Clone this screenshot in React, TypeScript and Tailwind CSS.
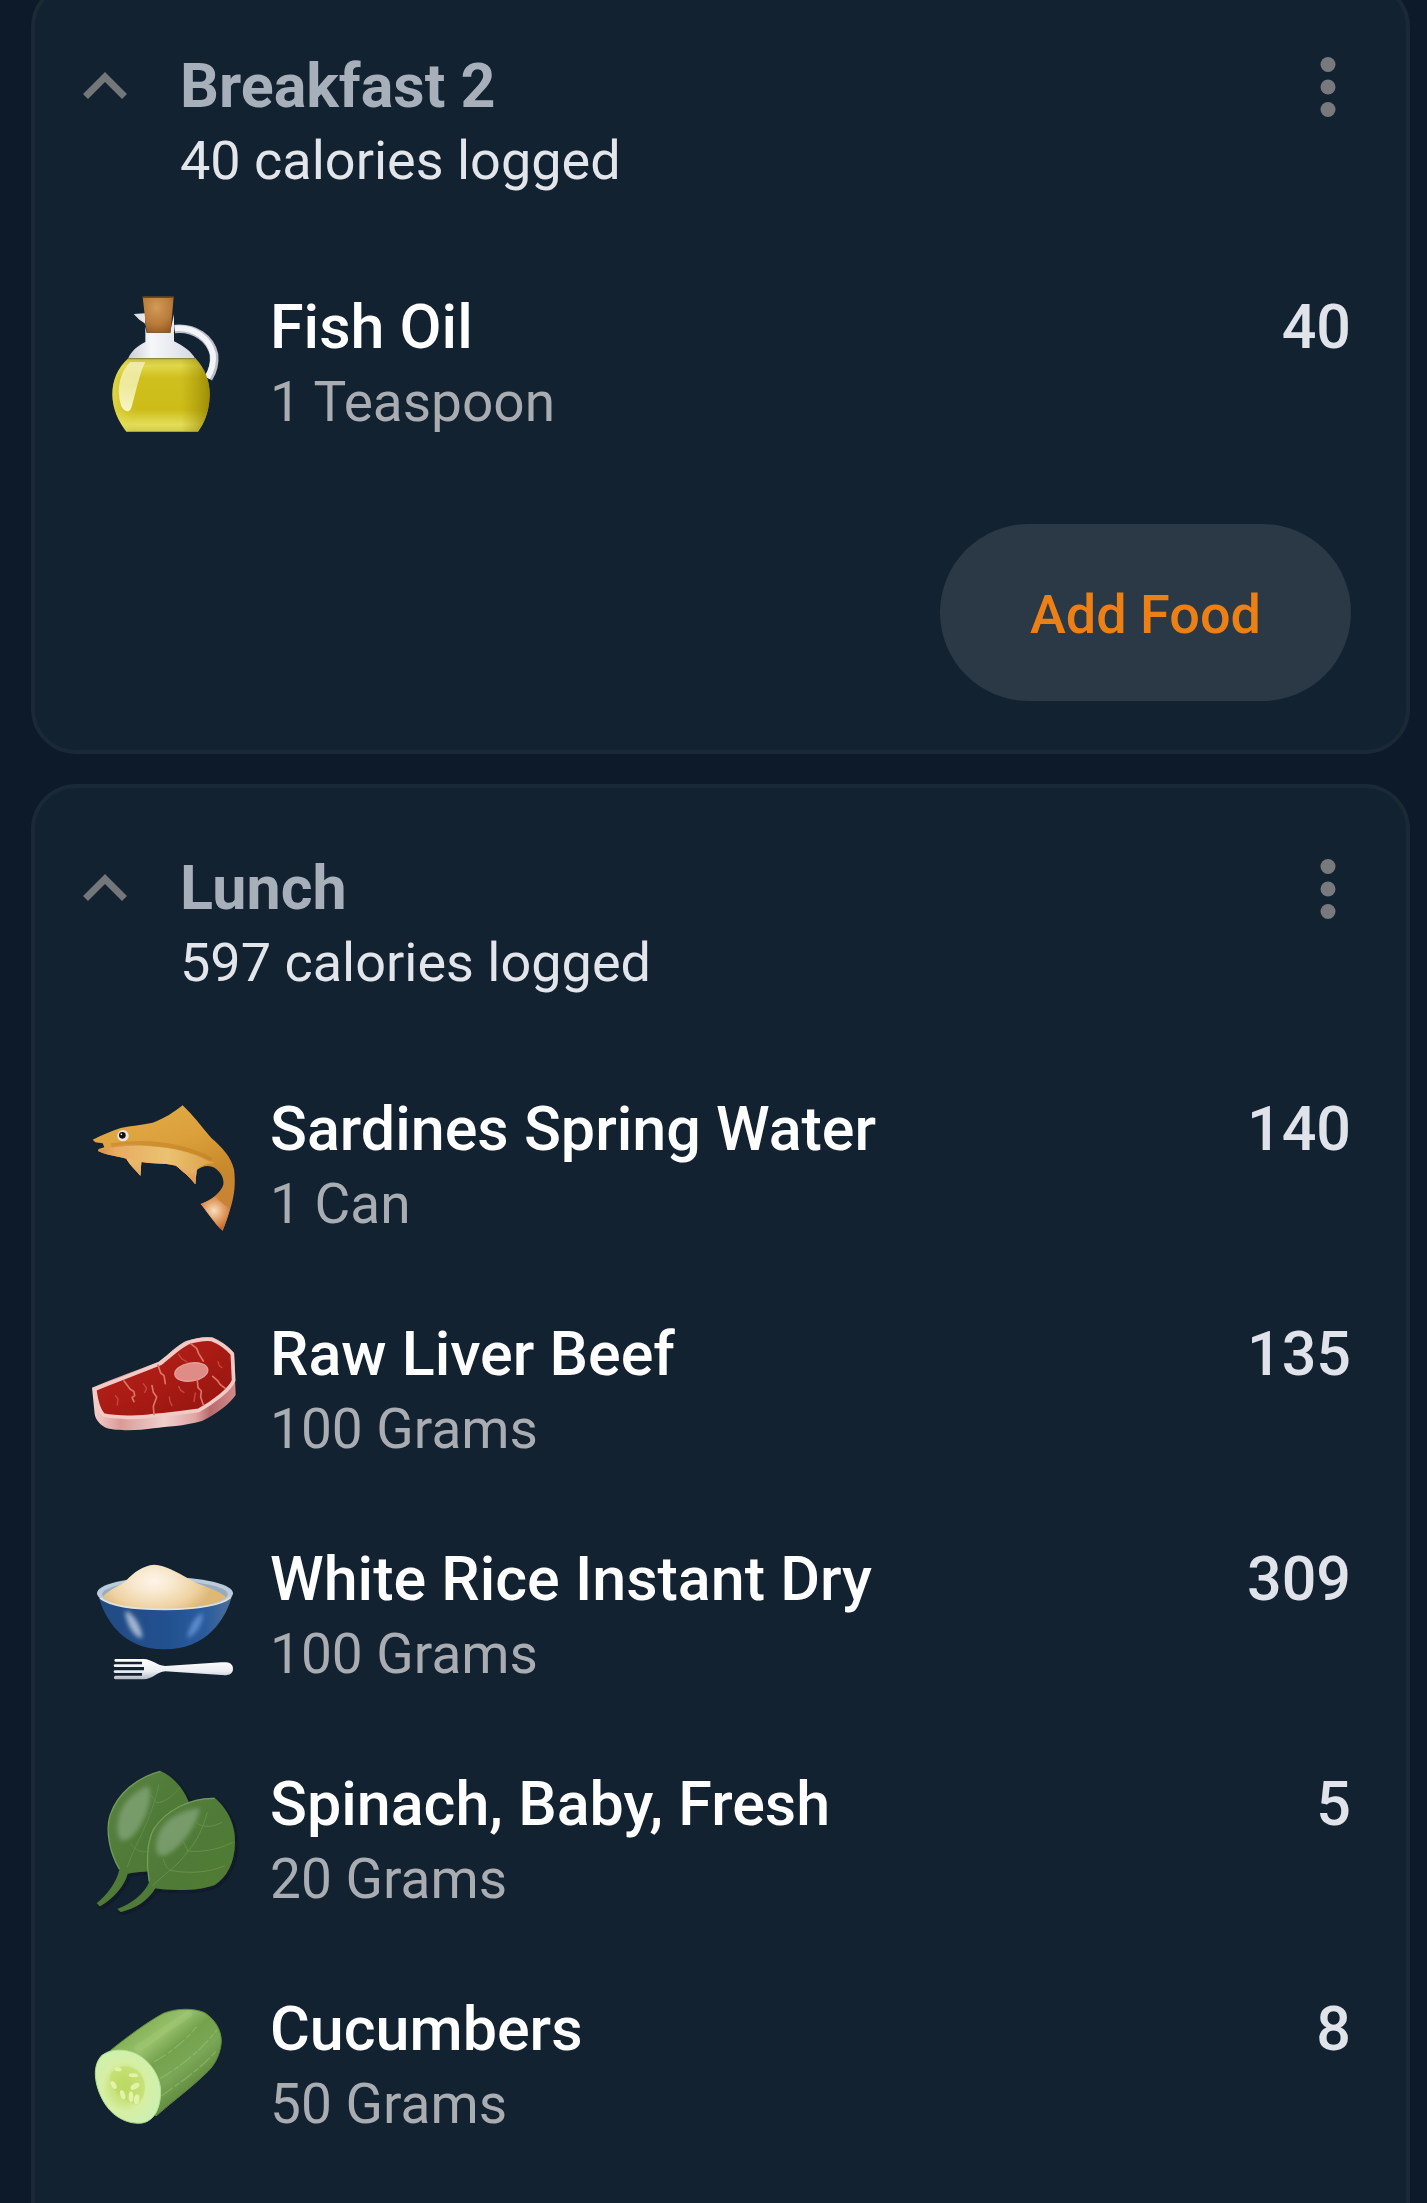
import type { ReactNode } from 'react';

function OilIcon() {
  return (
    <svg viewBox="30 32 450 450" className="size-[150px] shrink-0" aria-hidden="true">
      <defs>
        <linearGradient id="oil" x1="0" y1="0" x2="0" y2="1">
          <stop offset="0" stopColor="#c9be3c" />
          <stop offset="0.1" stopColor="#e0d84a" />
          <stop offset="0.26" stopColor="#cfc01f" />
          <stop offset="0.7" stopColor="#cdbc18" />
          <stop offset="0.9" stopColor="#e3de58" />
          <stop offset="1" stopColor="#d2cb4a" />
        </linearGradient>
        <linearGradient id="oilShade" x1="0" y1="0" x2="1" y2="0">
          <stop offset="0" stopColor="#f0ec7a" stopOpacity="0.5" />
          <stop offset="0.25" stopColor="#d8cc30" stopOpacity="0" />
          <stop offset="0.7" stopColor="#a59200" stopOpacity="0" />
          <stop offset="1" stopColor="#8d7d00" stopOpacity="0.75" />
        </linearGradient>
        <linearGradient id="glass" x1="0" y1="0" x2="1" y2="0">
          <stop offset="0" stopColor="#c9cdd6" />
          <stop offset="0.35" stopColor="#f6f7fa" />
          <stop offset="0.7" stopColor="#e6e8ee" />
          <stop offset="1" stopColor="#d5d8e0" />
        </linearGradient>
        <radialGradient id="cork" cx="0.45" cy="0.3" r="0.8">
          <stop offset="0" stopColor="#d39a58" />
          <stop offset="0.6" stopColor="#b87a38" />
          <stop offset="1" stopColor="#935518" />
        </radialGradient>
        <linearGradient id="oilGlow" x1="0" y1="0" x2="0" y2="1">
          <stop offset="0" stopColor="#f7f5cf" stopOpacity="0.7" />
          <stop offset="0.5" stopColor="#f4f1b0" stopOpacity="0.85" />
          <stop offset="1" stopColor="#f7f4c8" />
        </linearGradient>
      </defs>
      <path d="M284 149C345 143 392 178 402 226C405 254 398 276 385 297" fill="none" stroke="#b9bfca" strokeWidth="26" />
      <path d="M284 147C344 142 388 178 399 224C402 252 395 274 382 295" fill="none" stroke="#f3f4f7" strokeWidth="17" />
      <path d="M161 104L196 102V188C172 200 155 214 144 238H346C332 214 310 200 282 186V104L270 160H200L194 132L178 121Z" fill="url(#glass)" />
      <path d="M145 237H346C374 266 390 306 389 348C388 388 378 424 354 457H139C114 424 98 388 97 346C97 302 113 266 145 237Z" fill="url(#oil)" />
      <path d="M145 237H346C374 266 390 306 389 348C388 388 378 424 354 457H139C114 424 98 388 97 346C97 302 113 266 145 237Z" fill="url(#oilShade)" />
      <path d="M144 238H347" stroke="#8f8a3e" strokeWidth="4" />
      <path d="M150 248H196C178 284 170 330 154 385C146 404 130 396 123 378C108 326 120 280 150 248Z" fill="url(#oilGlow)" />
      <path d="M188 52H281L272 160H200Z" fill="url(#cork)" />
      <path d="M188 54H281" stroke="#794411" strokeWidth="4" />
    </svg>
  );
}

function FishIcon() {
  return (
    <svg viewBox="30 22 450 450" className="size-[150px] shrink-0" aria-hidden="true">
      <defs>
        <linearGradient id="fishBack" x1="0" y1="0" x2="0.4" y2="1">
          <stop offset="0" stopColor="#e3ad4c" />
          <stop offset="0.45" stopColor="#dba03a" />
          <stop offset="0.75" stopColor="#c8892c" />
          <stop offset="1" stopColor="#c98234" />
        </linearGradient>
        <linearGradient id="fishBelly" x1="0" y1="0" x2="1" y2="0">
          <stop offset="0" stopColor="#e08a4c" />
          <stop offset="0.15" stopColor="#e9ac62" />
          <stop offset="0.6" stopColor="#eac272" />
          <stop offset="1" stopColor="#dba247" />
        </linearGradient>
        <radialGradient id="fishTail" gradientUnits="userSpaceOnUse" cx="402" cy="378" r="58">
          <stop offset="0" stopColor="#f8dfc2" />
          <stop offset="0.45" stopColor="#e6a66e" />
          <stop offset="1" stopColor="#c26b30" />
        </radialGradient>
        <linearGradient id="fishFin" gradientUnits="userSpaceOnUse" x1="0" y1="222" x2="0" y2="299">
          <stop offset="0" stopColor="#e9bd6e" />
          <stop offset="0.5" stopColor="#e6ae62" />
          <stop offset="1" stopColor="#dd9252" />
        </linearGradient>
      </defs>
      <path d="M38 165C70 150 96 138 122 130C154 122 184 122 218 114C254 102 282 82 308 62C340 92 364 126 394 160C424 186 452 214 462 254C468 300 462 334 454 362C444 392 436 418 428 438C404 418 384 384 362 358C394 346 424 322 430 300C434 278 416 252 396 246C378 240 362 248 350 256L346 299C330 276 308 260 288 243C250 234 214 238 184 232L181 273C168 256 150 242 139 222C112 214 82 212 54 199L56 193L73 188L68 176L46 173Z" fill="url(#fishBack)" />
      <path d="M80 192C110 176 150 178 196 183C266 190 340 196 404 236C380 234 362 244 350 256L346 299C330 276 308 260 288 243C250 234 214 238 184 232L181 273C168 256 150 242 139 222C112 214 82 212 54 199Z" fill="url(#fishBelly)" />
      <path d="M94 182C180 170 292 172 394 226" fill="none" stroke="#bd761f" strokeOpacity="0.4" strokeWidth="13" />
      <path d="M139 222L184 232L181 273C168 256 150 242 139 222ZM288 243L350 254L346 299C330 276 308 260 288 243Z" fill="url(#fishFin)" />
      <path d="M362 358C378 352 394 344 406 335C420 352 436 364 451 371C444 396 436 420 428 438C404 418 384 384 362 358Z" fill="url(#fishTail)" />
      <circle cx="129" cy="153" r="17" fill="#e9e6df" />
      <circle cx="127" cy="152" r="10" fill="#141210" />
      <circle cx="124" cy="149" r="2.5" fill="#ffffff" />
    </svg>
  );
}

function SteakIcon() {
  return (
    <svg viewBox="30 22 450 450" className="size-[150px] shrink-0" aria-hidden="true">
      <defs>
        <linearGradient id="fat" x1="0" y1="0" x2="1" y2="0">
          <stop offset="0" stopColor="#f4d3d0" />
          <stop offset="0.2" stopColor="#d99b98" />
          <stop offset="0.5" stopColor="#f0cfcd" />
          <stop offset="0.72" stopColor="#e0a5a3" />
          <stop offset="0.82" stopColor="#b96a6c" />
          <stop offset="1" stopColor="#d28a8b" />
        </linearGradient>
        <linearGradient id="meat" x1="0" y1="0" x2="1" y2="1">
          <stop offset="0" stopColor="#b8251b" />
          <stop offset="0.5" stopColor="#a91b14" />
          <stop offset="1" stopColor="#93140f" />
        </linearGradient>
      </defs>
      <path d="M36 234C100 206 170 182 236 156C264 136 292 106 318 94C344 86 372 80 398 83C424 94 446 112 462 129L467 256C448 284 410 312 366 334C310 350 262 350 220 356C176 364 110 364 82 356C62 348 46 330 44 312Z" fill="url(#fat)" />
      <path d="M44 239C104 214 176 188 240 162C268 142 296 112 322 100C348 91 372 87 394 89C420 99 442 116 457 133L461 212C450 240 402 276 356 302C300 310 270 314 220 318C176 326 110 324 70 316C56 302 48 270 44 239Z" fill="url(#meat)" stroke="#f2cbc7" strokeWidth="11" strokeLinejoin="round" />
      <ellipse cx="334" cy="187" rx="50" ry="27" transform="rotate(-9 334 187)" fill="#df8c86" stroke="#e69f98" strokeWidth="4" />
      <g fill="none" stroke="#dc7468" strokeWidth="5" strokeLinecap="round" strokeLinejoin="round">
        <path d="M132 214L150 238L162 246L164 258L156 264L162 276" />
        <path d="M234 166L242 190L252 198L256 222" />
        <path d="M332 102L350 116L356 132L370 154" />
        <path d="M216 228L220 248L230 262L220 290L222 314" />
        <path d="M352 212L354 234L364 244L362 262L370 286" />
        <path d="M398 200L412 212L420 224L436 236" />
      </g>
      <g fill="none" stroke="#c9483e" strokeWidth="4" strokeLinecap="round">
        <path d="M106 258L114 268L112 286M190 222L200 236L194 248M268 262L270 276L276 288M296 230L302 242L312 248M296 134L306 148L322 157M346 250L342 276M414 156L418 168L426 174" />
      </g>
    </svg>
  );
}

function RiceIcon() {
  return (
    <svg viewBox="30 -8 450 450" className="size-[150px] shrink-0" aria-hidden="true">
      <defs>
        <linearGradient id="bowl" x1="0" y1="0" x2="1" y2="0">
          <stop offset="0" stopColor="#214b83" />
          <stop offset="0.5" stopColor="#22508f" />
          <stop offset="0.8" stopColor="#2a5c9d" />
          <stop offset="1" stopColor="#4d6f99" />
        </linearGradient>
        <radialGradient id="rice" gradientUnits="userSpaceOnUse" cx="220" cy="108" r="180" gradientTransform="matrix(1 0 0 0.62 0 42)">
          <stop offset="0" stopColor="#fdf5ea" />
          <stop offset="0.35" stopColor="#f8e7cc" />
          <stop offset="0.75" stopColor="#eed1a0" />
          <stop offset="1" stopColor="#ddb877" />
        </radialGradient>
        <linearGradient id="fork" x1="0" y1="0" x2="0" y2="1">
          <stop offset="0" stopColor="#ffffff" />
          <stop offset="0.6" stopColor="#eceef3" />
          <stop offset="1" stopColor="#b3b9c6" />
        </linearGradient>
        <filter id="shine" x="-50%" y="-50%" width="200%" height="200%">
          <feGaussianBlur stdDeviation="7" />
        </filter>
      </defs>
      <path d="M54 150C74 222 126 314 252 314C382 314 438 222 457 150Z" fill="url(#bowl)" />
      <path d="M136 200C160 200 190 258 186 280C162 282 136 232 136 200Z" fill="#b9c6da" fillOpacity="0.85" filter="url(#shine)" />
      <path d="M368 204C344 212 324 256 322 280C350 270 370 232 368 204Z" fill="#5f90d3" fillOpacity="0.9" filter="url(#shine)" />
      <ellipse cx="255" cy="146" rx="204" ry="49" fill="#bccbd9" />
      <ellipse cx="255" cy="149" rx="188" ry="41" fill="#97acc0" />
      <path d="M68 156C90 132 120 124 138 108C160 84 190 62 222 60C258 62 290 82 322 100C352 122 414 132 438 158C414 182 330 193 250 193C160 193 92 182 68 156Z" fill="url(#rice)" />
      <path d="M60 160C96 188 170 194 254 194C350 193 424 182 452 158" fill="none" stroke="#e3e2d8" strokeWidth="5" />
      <path d="M106 343H190C218 344 228 362 256 364L424 353C446 351 459 356 459 372C459 388 446 393 424 391L256 380C230 382 218 404 190 404H106C100 402 100 395 106 393H186V385H104C100 382 100 379 104 377H192V367H104C100 365 100 361 104 359H186V351H106C102 349 102 344 106 343Z" fill="url(#fork)" />
    </svg>
  );
}

function SpinachIcon() {
  return (
    <svg viewBox="30 38 450 450" className="size-[150px] shrink-0" aria-hidden="true">
      <defs>
        <linearGradient id="leaf" x1="0" y1="0" x2="1" y2="1">
          <stop offset="0" stopColor="#5b8546" />
          <stop offset="0.5" stopColor="#4f7a37" />
          <stop offset="1" stopColor="#527d34" />
        </linearGradient>
        <filter id="gloss" x="-40%" y="-40%" width="180%" height="180%">
          <feGaussianBlur stdDeviation="6" />
        </filter>
        <filter id="leafShadow" x="-20%" y="-20%" width="140%" height="140%">
          <feDropShadow dx="5" dy="5" stdDeviation="5" floodColor="#08121c" floodOpacity="0.7" />
        </filter>
      </defs>
      <g filter="url(#leafShadow)">
        <path d="M241 50C284 68 318 112 332 160L250 348C210 352 168 352 143 358C132 398 100 432 60 456L50 447C80 422 110 384 118 346C90 296 76 232 90 184C112 116 174 68 241 50Z" fill="url(#leaf)" />
        <path d="M241 51C174 68 112 116 90 184C76 232 90 296 118 344" fill="none" stroke="#6f9a5a" strokeWidth="4" />
      </g>
      <path d="M142 338C164 270 214 200 236 92M230 146C258 142 278 126 300 98M152 268C168 290 184 294 202 292M230 146L212 122" fill="none" stroke="#628b49" strokeWidth="3" />
      <path d="M206 94C216 116 208 150 196 184C180 220 150 268 122 256C104 236 112 180 136 146C156 120 184 102 206 94Z" fill="#7fa274" fillOpacity="0.8" filter="url(#gloss)" />
      <g filter="url(#leafShadow)">
        <path d="M404 131C438 158 466 206 465 264C464 326 440 370 404 392C350 412 270 408 226 402C204 440 164 464 122 473L112 464C154 448 194 418 208 382C198 330 200 266 220 226C258 166 334 130 404 131Z" fill="url(#leaf)" />
        <path d="M404 132C334 130 258 166 220 226C200 266 198 330 208 382" fill="none" stroke="#739e58" strokeWidth="4" />
      </g>
      <path d="M218 394C250 360 290 340 324 290C350 260 368 226 382 174M324 290C370 294 414 286 458 264M270 348C324 358 386 356 434 334M352 208C372 220 400 218 426 204M250 314C256 334 262 344 272 348M310 262L324 290" fill="none" stroke="#668f4b" strokeWidth="3" />
      <path d="M358 162C358 190 330 240 300 270C276 296 248 312 234 300C222 280 230 240 250 214C276 184 318 166 358 162Z" fill="#7fa274" fillOpacity="0.8" filter="url(#gloss)" />
    </svg>
  );
}

function CucumberIcon() {
  return (
    <svg viewBox="30 38 450 450" className="size-[150px] shrink-0" aria-hidden="true">
      <defs>
        <linearGradient id="rind" gradientUnits="userSpaceOnUse" x1="170" y1="150" x2="320" y2="330">
          <stop offset="0" stopColor="#86b257" />
          <stop offset="0.25" stopColor="#98c06c" />
          <stop offset="0.48" stopColor="#74a24c" />
          <stop offset="0.75" stopColor="#7aa756" />
          <stop offset="1" stopColor="#648f42" />
        </linearGradient>
        <radialGradient id="flesh" cx="0.45" cy="0.5" r="0.55">
          <stop offset="0" stopColor="#bcd968" />
          <stop offset="0.4" stopColor="#cbe584" />
          <stop offset="0.62" stopColor="#d6efa4" />
          <stop offset="1" stopColor="#cdf0b0" />
        </radialGradient>
      </defs>
      <path d="M88 216C140 174 196 132 250 102C290 86 342 86 374 100C404 120 424 150 424 186C422 220 408 252 384 276C336 324 282 362 228 410Z" fill="url(#rind)" stroke="#5f8a42" strokeWidth="3" />
      <path d="M174 206L326 104" stroke="#a9d07c" strokeOpacity="0.3" strokeWidth="22" strokeLinecap="round" />
      <path d="M240 298C300 262 364 214 410 152M244 350C306 306 358 270 408 216M222 248C270 220 310 190 350 142" fill="none" stroke="#a1ca7c" strokeOpacity="0.45" strokeWidth="4" strokeDasharray="42 7 18 5" />
      <path d="M66 228C92 210 130 206 170 224C212 246 240 290 242 334C242 382 226 424 186 431C148 436 104 416 78 378C48 334 30 264 66 228Z" fill="url(#flesh)" stroke="#b5de91" strokeWidth="3" />
      <path d="M100 274C126 254 160 256 184 286C202 318 196 352 172 376C144 374 104 342 92 308C86 292 90 282 100 274Z" fill="#b8d65c" fillOpacity="0.45" />
      <g fill="#e2f3a8">
        <ellipse cx="114" cy="270" rx="11" ry="6" transform="rotate(10 114 270)" />
        <ellipse cx="101" cy="317" rx="7" ry="13" transform="rotate(-30 101 317)" />
        <ellipse cx="128" cy="346" rx="7" ry="14" transform="rotate(-18 128 346)" />
        <ellipse cx="160" cy="288" rx="14" ry="6" transform="rotate(4 160 288)" />
        <ellipse cx="165" cy="321" rx="15" ry="8" transform="rotate(-32 165 321)" />
        <ellipse cx="153" cy="352" rx="7" ry="17" />
        <ellipse cx="170" cy="360" rx="8" ry="15" transform="rotate(8 170 360)" />
      </g>
    </svg>
  );
}

type Food = { name: string; amount: string; calories: number; icon: ReactNode };

const breakfast: Food[] = [{ name: 'Fish Oil', amount: '1 Teaspoon', calories: 40, icon: <OilIcon /> }];

const lunch: Food[] = [
  { name: 'Sardines Spring Water', amount: '1 Can', calories: 140, icon: <FishIcon /> },
  { name: 'Raw Liver Beef', amount: '100 Grams', calories: 135, icon: <SteakIcon /> },
  { name: 'White Rice Instant Dry', amount: '100 Grams', calories: 309, icon: <RiceIcon /> },
  { name: 'Spinach, Baby, Fresh', amount: '20 Grams', calories: 5, icon: <SpinachIcon /> },
  { name: 'Cucumbers', amount: '50 Grams', calories: 8, icon: <CucumberIcon /> },
];

function MealHeader({ title, summary }: { title: string; summary: string }) {
  return (
    <header className="flex items-start">
      <button type="button" aria-label={`Collapse ${title}`} className="flex h-[74px] w-11 shrink-0 items-center justify-center">
        <svg viewBox="0 0 44 28" className="h-7 w-11" aria-hidden="true">
          <path d="M2.500 24.500L22 5L41.500 24.500" fill="none" stroke="#74777a" strokeWidth="7" />
        </svg>
      </button>
      <div className="ml-[53px] min-w-0 flex-1">
        <h2 className="text-[61px] leading-[74px] font-bold text-[#a7afba]">{title}</h2>
        <p className="text-[54px] leading-[76px] text-[#e2e6eb]">{summary}</p>
      </div>
      <button type="button" aria-label={`${title} options`} className="flex h-[76px] w-[46px] shrink-0 items-center justify-center">
        <svg viewBox="0 0 16 60" className="h-[60px] w-4" fill="#77797c" aria-hidden="true">
          <circle cx="8" cy="7.500" r="7.500" />
          <circle cx="8" cy="30" r="7.500" />
          <circle cx="8" cy="52.500" r="7.500" />
        </svg>
      </button>
    </header>
  );
}

function FoodList({ foods }: { foods: Food[] }) {
  return (
    <ul className="mt-[91px] flex flex-col gap-[75px] pl-[7px]">
      {foods.map((food) => (
        <li key={food.name} className="flex items-start">
          {food.icon}
          <div className="ml-[30px] min-w-0 flex-1">
            <h3 className="text-[61px] leading-[74px] font-medium text-white">{food.name}</h3>
            <p className="text-[55px] leading-[76px] text-[#a9adb1]">{food.amount}</p>
          </div>
          <span className="text-[61px] leading-[74px] font-medium text-[#e0e4ea]">{food.calories}</span>
        </li>
      ))}
    </ul>
  );
}

export default function App() {
  return (
    <main className="flex min-h-screen flex-col gap-[30px] overflow-hidden bg-[#0c1a29] pr-[17px] pl-[31px] font-['Roboto',sans-serif]">
      <section className="-mt-[18px] rounded-[45px] border-4 border-[#1a2935] bg-[#132231] pt-[63px] pr-[55px] pb-[49px] pl-12">
        <MealHeader title="Breakfast 2" summary="40 calories logged" />
        <FoodList foods={breakfast} />
        <div className="mt-[84px] flex justify-end">
          <button type="button" className="h-[177px] rounded-full bg-[#2b3845] px-[90px] pt-1 text-[54px] font-medium text-[#ec8014]">
            Add Food
          </button>
        </div>
      </section>
      <section className="flex-1 rounded-t-[45px] border-4 border-b-0 border-[#1a2935] bg-[#132231] pt-[63px] pr-[55px] pb-12 pl-12">
        <MealHeader title="Lunch" summary="597 calories logged" />
        <FoodList foods={lunch} />
      </section>
    </main>
  );
}
